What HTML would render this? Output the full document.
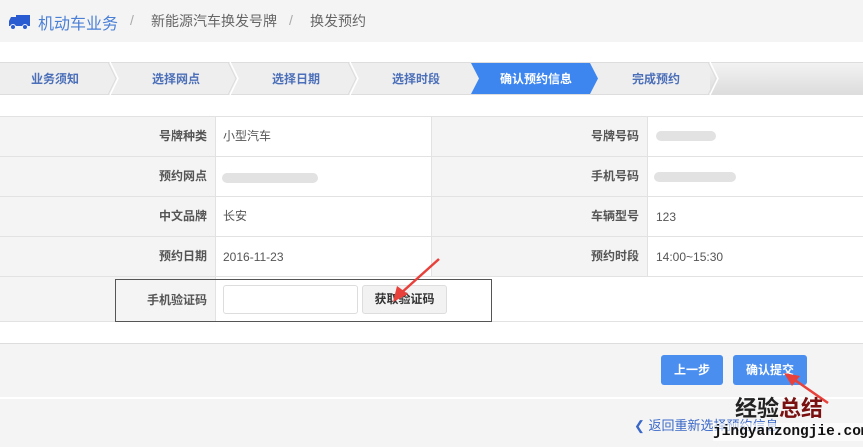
<!DOCTYPE html>
<html><head><meta charset="utf-8"><style>
*{margin:0;padding:0;box-sizing:border-box}
body{width:863px;height:447px;overflow:hidden;background:#fff;font-family:"Liberation Sans","Noto Sans CJK SC",sans-serif;font-size:12px;color:#555;position:relative}
.a{position:absolute}
.hdr{left:0;top:0;width:863px;height:42px;background:#f4f4f4}
.lbl{position:absolute;text-align:right;font-weight:bold;color:#555;font-size:12px;line-height:40px;height:40px}
.val{position:absolute;color:#555;font-size:12px;line-height:40px;height:40px}
.blur{position:absolute;height:10px;border-radius:5px;background:#e2e2e2}
.btn{position:absolute;background:#4a8ff0;color:#fff;border-radius:3px;text-align:center;line-height:30px;font-size:12px;font-weight:bold}
</style></head><body>
<div class="a hdr"></div>
<svg class="a" style="left:9px;top:15px" width="21" height="15" viewBox="0 0 21 15"><rect x="7" y="0" width="14" height="11" fill="#2a5bd0"/><path d="M0 6 L2 2 H7 V11 H0Z" fill="#2a5bd0"/><circle cx="4" cy="12" r="2.5" fill="#2a5bd0" stroke="#f4f4f4"/><circle cx="16" cy="12" r="2.5" fill="#2a5bd0" stroke="#f4f4f4"/></svg>
<div class="a" style="left:38px;top:10px;font-size:16px;color:#4a7fd6">机动车业务</div>
<div class="a" style="left:130px;top:12px;font-size:14px;color:#aaa">/</div>
<div class="a" style="left:151px;top:11px;font-size:14px;color:#666">新能源汽车换发号牌</div>
<div class="a" style="left:289px;top:12px;font-size:14px;color:#aaa">/</div>
<div class="a" style="left:310px;top:11px;font-size:14px;color:#666">换发预约</div>

<svg class="a" style="left:0;top:62px" width="863" height="33">
<defs><linearGradient id="g" x1="0" x2="0" y1="0" y2="1"><stop offset="0" stop-color="#f3f3f3"/><stop offset="1" stop-color="#dcdcdc"/></linearGradient></defs>
<rect x="0" y="0" width="863" height="33" fill="#eee"/>
<rect x="710" y="0" width="153" height="33" fill="url(#g)"/>
<line x1="0" y1="0.5" x2="863" y2="0.5" stroke="#ddd"/>
<line x1="0" y1="32.5" x2="863" y2="32.5" stroke="#ddd"/>
<g fill="none" stroke="#fff" stroke-width="1.5"><path d="M110 0 L118 16.5 L110 33"/><path d="M230 0 L238 16.5 L230 33"/><path d="M350 0 L358 16.5 L350 33"/><path d="M710 0 L718 16.5 L710 33"/></g>
<g fill="none" stroke="#ddd"><path d="M108 0 L116 16.5 L108 33"/><path d="M228 0 L236 16.5 L228 33"/><path d="M348 0 L356 16.5 L348 33"/><path d="M708 0 L716 16.5 L708 33"/></g>
<path d="M471 1 L590 1 L598 16.5 L590 32 L471 32 L479 16.5Z" fill="#3d86f0"/>
<g font-size="12" font-weight="bold" fill="#4b6fb8" text-anchor="middle" font-family="Liberation Sans,Noto Sans CJK SC,sans-serif">
<text x="55" y="21">业务须知</text><text x="176" y="21">选择网点</text><text x="296" y="21">选择日期</text><text x="416" y="21">选择时段</text><text x="536" y="21" fill="#fff">确认预约信息</text><text x="656" y="21">完成预约</text></g>
</svg>

<div class="a" style="left:0;top:116px;width:863px;height:206px;border-top:1px solid #e2e2e2;border-bottom:1px solid #e2e2e2"></div>
<div class="a" style="left:0;top:117px;width:215px;height:204px;background:#f4f4f4"></div>
<div class="a" style="left:431px;top:117px;width:217px;height:159px;background:#f4f4f4;border-left:1px solid #e2e2e2;border-right:1px solid #e2e2e2"></div>
<div class="a" style="left:215px;top:117px;width:1px;height:204px;background:#e2e2e2"></div>
<div class="a" style="left:0;top:156px;width:863px;height:1px;background:#e2e2e2"></div>
<div class="a" style="left:0;top:196px;width:863px;height:1px;background:#e2e2e2"></div>
<div class="a" style="left:0;top:236px;width:863px;height:1px;background:#e2e2e2"></div>
<div class="a" style="left:0;top:276px;width:863px;height:1px;background:#e2e2e2"></div>

<div class="lbl" style="left:100px;width:107px;top:116px">号牌种类</div>
<div class="lbl" style="left:100px;width:107px;top:156px">预约网点</div>
<div class="lbl" style="left:100px;width:107px;top:196px">中文品牌</div>
<div class="lbl" style="left:100px;width:107px;top:236px">预约日期</div>
<div class="lbl" style="left:100px;width:107px;top:280px">手机验证码</div>
<div class="val" style="left:223px;top:116px">小型汽车</div>
<div class="blur" style="left:222px;top:173px;width:96px"></div>
<div class="val" style="left:223px;top:196px">长安</div>
<div class="val" style="left:223px;top:237px">2016-11-23</div>
<div class="lbl" style="left:530px;width:109px;top:116px">号牌号码</div>
<div class="lbl" style="left:530px;width:109px;top:156px">手机号码</div>
<div class="lbl" style="left:530px;width:109px;top:196px">车辆型号</div>
<div class="lbl" style="left:530px;width:109px;top:236px">预约时段</div>
<div class="blur" style="left:656px;top:131px;width:60px"></div>
<div class="blur" style="left:654px;top:172px;width:82px"></div>
<div class="val" style="left:656px;top:197px">123</div>
<div class="val" style="left:656px;top:237px">14:00~15:30</div>

<div class="a" style="left:223px;top:285px;width:135px;height:29px;border:1px solid #ddd;border-radius:3px;background:#fff"></div>
<div class="a" style="left:362px;top:285px;width:85px;height:29px;border:1px solid #ddd;border-radius:3px;background:#f2f2f2;text-align:center;line-height:27px;font-weight:bold;color:#333">获取验证码</div>
<div class="a" style="left:115px;top:279px;width:377px;height:43px;border:1px solid #555"></div>
<svg class="a" style="left:380px;top:258px" width="60" height="50"><path d="M59 1 L20 36" stroke="#e8403a" stroke-width="2.5"/><path d="M13 44 L17 28 L28 36Z" fill="#e8403a"/></svg>

<div class="a" style="left:0;top:343px;width:863px;height:54px;background:#f4f4f4;border-top:1px solid #ddd"></div>
<div class="a" style="left:0;top:399px;width:863px;height:48px;background:#f4f4f4"></div>
<div class="btn" style="left:661px;top:355px;width:62px">上一步</div>
<div class="btn" style="left:733px;top:355px;width:74px">确认提交</div>
<svg class="a" style="left:780px;top:370px" width="50" height="35"><path d="M48 33 L12 8" stroke="#e8403a" stroke-width="2.5"/><path d="M4 3 L20 6 L12 16Z" fill="#e8403a"/></svg>
<div class="a" style="left:634px;top:415px;font-size:13px;color:#3a68c8">❮ 返回重新选择预约信息</div>
<div class="a" style="left:735px;top:396px;font-size:22px;line-height:26px;font-weight:bold;color:#222">经验<span style="color:#7a1010">总结</span></div>
<div class="a" style="left:713px;top:423px;font-size:14.5px;line-height:18px;color:#111;font-family:'Liberation Mono',monospace;font-weight:bold;background:rgba(255,255,255,.6)">jingyanzongjie.com</div>
</body></html>
